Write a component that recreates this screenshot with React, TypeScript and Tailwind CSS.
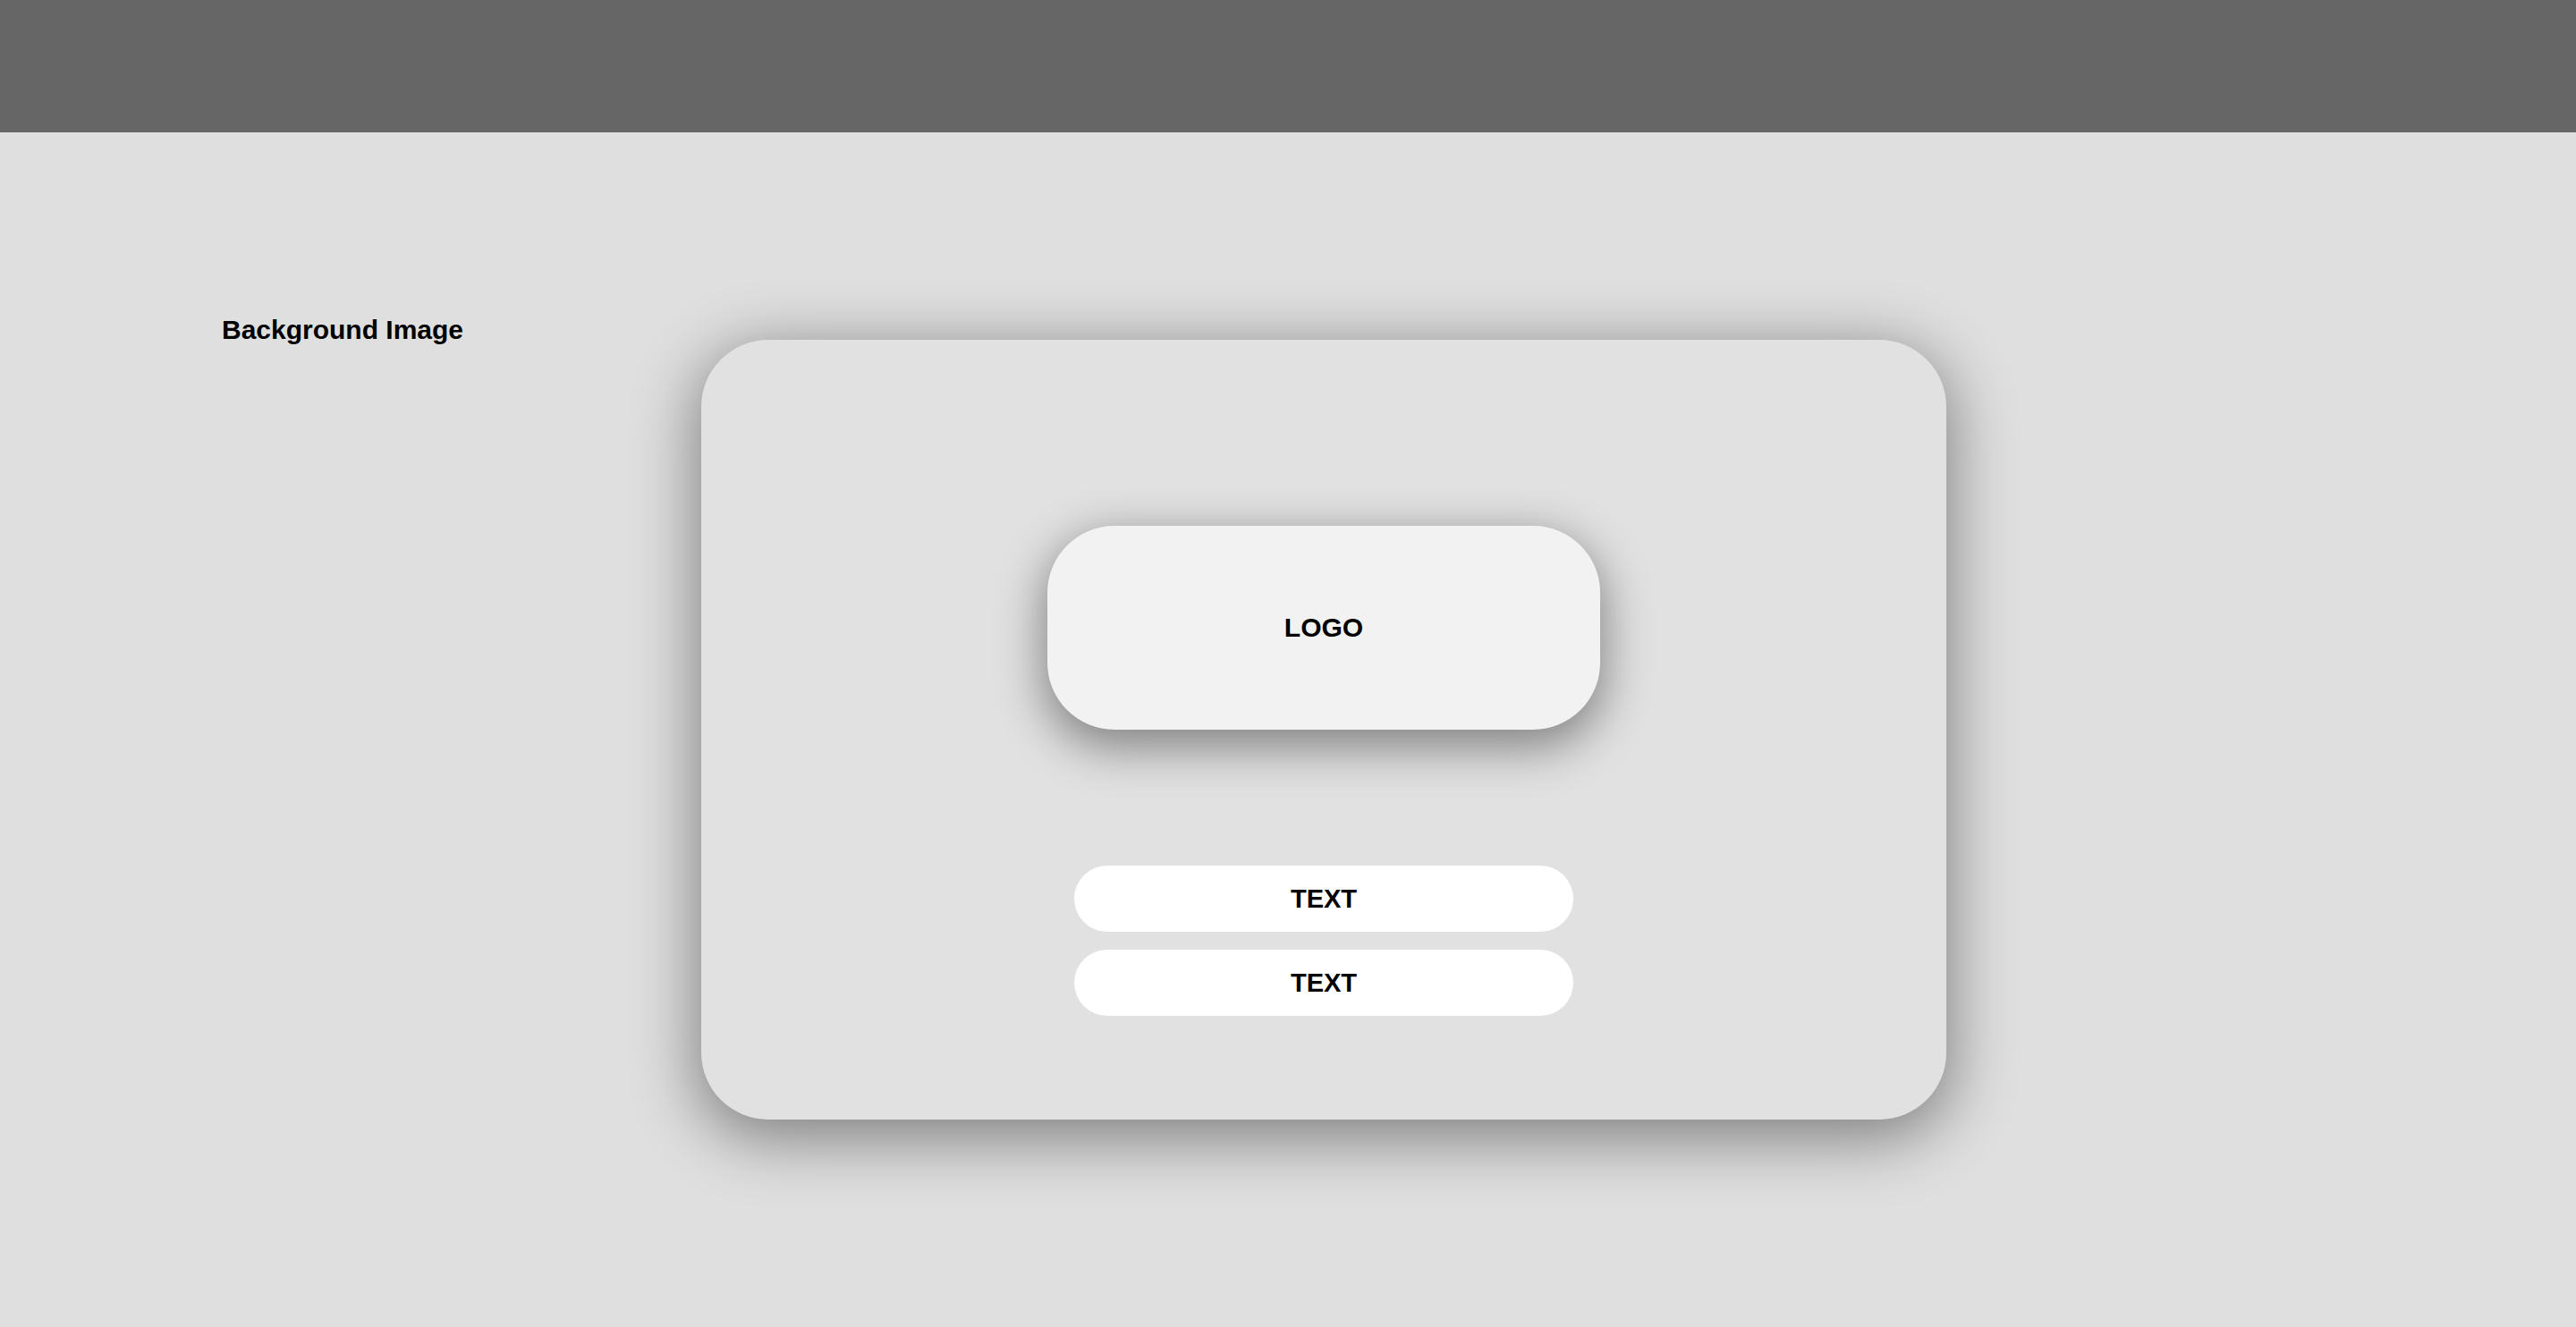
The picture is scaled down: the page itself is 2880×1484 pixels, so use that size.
export default function App() {
  return (
    <div
      className="min-h-[1484px] w-full bg-[#dfdfdf] text-black"
      style={{ fontFamily: '"Liberation Sans", Arial, sans-serif' }}
    >
      <header className="h-[148px] w-full bg-[#666666]" />

      <main className="flex items-start pt-[204px]">
        <div className="w-[784px] shrink-0 pl-[248px]">
          <h1 className="text-[30px] font-bold leading-[34px]">Background Image</h1>
        </div>

        <section className="mt-[28px] flex h-[872px] w-[1392px] shrink-0 flex-col items-center rounded-[75px] bg-[#e1e1e1] pt-[208px] shadow-[0_16px_70px_6px_rgba(0,0,0,0.42)]">
          <div className="flex h-[228px] w-[618px] items-center justify-center rounded-[75px] bg-[#f2f2f2] shadow-[0_16px_52px_4px_rgba(0,0,0,0.42)]">
            <span className="text-[30px] font-bold leading-none">LOGO</span>
          </div>

          <div className="mt-[152px] flex flex-col gap-[20px]">
            {['TEXT', 'TEXT'].map((label, i) => (
              <button
                key={i}
                className="flex h-[74px] w-[558px] items-center justify-center rounded-full bg-white text-[29px] font-bold leading-none"
              >
                {label}
              </button>
            ))}
          </div>
        </section>
      </main>
    </div>
  );
}
